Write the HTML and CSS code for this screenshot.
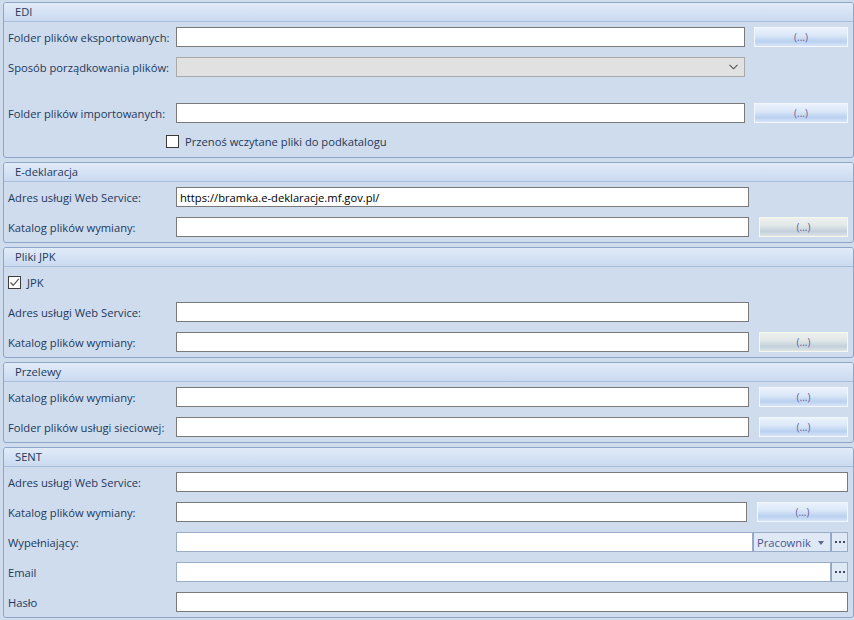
FILE: index.html
```html
<!DOCTYPE html>
<html lang="pl">
<head>
<meta charset="utf-8">
<title>Ustawienia</title>
<link rel="stylesheet" href="styles.css">
</head>
<body>
<div class="page">

  <section class="group">
    <div class="gh">EDI</div>
    <div class="gb pb6">
      <div class="row">
        <span class="lbl">Folder plików eksportowanych:</span>
        <div class="inp w569"></div>
        <div class="btn blue b-edi">(...)</div>
      </div>
      <div class="row mt10">
        <span class="lbl">Sposób porządkowania plików:</span>
        <div class="sel w569">
          <svg class="chev" width="9" height="6" viewBox="0 0 9 6"><path d="M0.5 0.8 L4.5 4.8 L8.5 0.8" fill="none" stroke="#505050" stroke-width="1.1"/></svg>
        </div>
      </div>
      <div class="row mt26">
        <span class="lbl">Folder plików importowanych:</span>
        <div class="inp w569"></div>
        <div class="btn blue b-edi">(...)</div>
      </div>
      <div class="row mt8 chkrow-edi">
        <span class="chk"></span>
        <span class="chklbl">Przenoś wczytane pliki do podkatalogu</span>
      </div>
    </div>
  </section>

  <section class="group">
    <div class="gh">E-deklaracja</div>
    <div class="gb">
      <div class="row">
        <span class="lbl">Adres usługi Web Service:</span>
        <div class="inp w573"><span class="val">https://bramka.e-deklaracje.mf.gov.pl/</span></div>
      </div>
      <div class="row mt10">
        <span class="lbl">Katalog plików wymiany:</span>
        <div class="inp w573"></div>
        <div class="btn gray b-std">(...)</div>
      </div>
    </div>
  </section>

  <section class="group">
    <div class="gh">Pliki JPK</div>
    <div class="gb">
      <div class="row">
        <span class="chk checked">
          <svg width="11" height="11" viewBox="0 0 11 11"><path d="M1.5 5.5 L4.2 8.3 L9.8 1.8" fill="none" stroke="#5a5a5a" stroke-width="1.3"/></svg>
        </span>
        <span class="chklbl">JPK</span>
      </div>
      <div class="row mt10">
        <span class="lbl">Adres usługi Web Service:</span>
        <div class="inp w573"></div>
      </div>
      <div class="row mt10">
        <span class="lbl">Katalog plików wymiany:</span>
        <div class="inp w573"></div>
        <div class="btn gray b-std">(...)</div>
      </div>
    </div>
  </section>

  <section class="group">
    <div class="gh">Przelewy</div>
    <div class="gb">
      <div class="row">
        <span class="lbl">Katalog plików wymiany:</span>
        <div class="inp w573"></div>
        <div class="btn blue b-std">(...)</div>
      </div>
      <div class="row mt10">
        <span class="lbl">Folder plików usługi sieciowej:</span>
        <div class="inp w573"></div>
        <div class="btn blue b-std">(...)</div>
      </div>
    </div>
  </section>

  <section class="group">
    <div class="gh">SENT</div>
    <div class="gb">
      <div class="row">
        <span class="lbl">Adres usługi Web Service:</span>
        <div class="inp w672"></div>
      </div>
      <div class="row mt10">
        <span class="lbl">Katalog plików wymiany:</span>
        <div class="inp w571"></div>
        <div class="btn blue b-sent">(...)</div>
      </div>
      <div class="row mt10">
        <span class="lbl">Wypełniający:</span>
        <div class="inp lookup w577"></div>
        <div class="combo">Pracownik<span class="tri"></span></div>
        <div class="dots"><svg width="10" height="2" viewBox="0 0 10 2"><rect x="0" y="0" width="2" height="2" fill="#3d4a6a"/><rect x="4" y="0" width="2" height="2" fill="#3d4a6a"/><rect x="8" y="0" width="2" height="2" fill="#3d4a6a"/></svg></div>
      </div>
      <div class="row mt10">
        <span class="lbl">Email</span>
        <div class="inp lookup w655"></div>
        <div class="dots"><svg width="10" height="2" viewBox="0 0 10 2"><rect x="0" y="0" width="2" height="2" fill="#3d4a6a"/><rect x="4" y="0" width="2" height="2" fill="#3d4a6a"/><rect x="8" y="0" width="2" height="2" fill="#3d4a6a"/></svg></div>
      </div>
      <div class="row mt10">
        <span class="lbl">Hasło</span>
        <div class="inp w672"></div>
      </div>
    </div>
  </section>

</div>
</body>
</html>
```

FILE: styles.css
```css
html, body {
  margin: 0;
  padding: 0;
  background: #cfdcee;
}
body {
  width: 854px;
  height: 620px;
  overflow: hidden;
  font-family: "Open Sans", "Noto Sans", sans-serif;
  font-size: 11.2px;
  color: #1e395b;
}
.page {
  display: flex;
  flex-direction: column;
  gap: 4px;
  padding: 2px 0 0 3px;
}
.group {
  width: 851px;
  box-sizing: border-box;
  border: 1px solid #8ea5c5;
  border-radius: 3px;
  background: #cfdcee;
}
.gh {
  height: 18px;
  line-height: 18px;
  padding-left: 11px;
  border-bottom: 1px solid #a7bedc;
  background: linear-gradient(to bottom, #e1ebf8 0%, #d3e1f4 60%, #cbdaef 100%);
  border-radius: 2px 2px 0 0;
}
.gb {
  padding: 5px 0 5px 4px;
}
.gb.pb6 { padding-bottom: 6px; }
.row {
  display: flex;
  align-items: center;
  height: 20px;
}
.mt8 { margin-top: 8px; }
.mt10 { margin-top: 10px; }
.mt26 { margin-top: 26px; }
.lbl {
  width: 168px;
  flex: none;
  white-space: nowrap;
}
.inp, .sel {
  height: 20px;
  box-sizing: border-box;
  border: 1px solid #7a7a7a;
  background: #ffffff;
  flex: none;
  display: flex;
  align-items: center;
}
.inp.lookup { border-color: #9aadc8; }
.sel {
  background: #e1e1e1;
  border-color: #a9a9a9;
  justify-content: flex-end;
  padding-right: 6px;
}
.val {
  color: #000;
  padding-left: 3px;
  white-space: nowrap;
}
.w569 { width: 569px; }
.w571 { width: 571px; }
.w573 { width: 573px; }
.w577 { width: 577px; }
.w655 { width: 655px; }
.w672 { width: 672px; }

.btn {
  height: 20px;
  box-sizing: border-box;
  flex: none;
  display: flex;
  align-items: center;
  justify-content: center;
  font-size: 10px;
  color: #6a5e94;
}
.btn.blue {
  border: 1px solid #f3f7fd;
  background: linear-gradient(to bottom, #eaf2fc 0%, #dce8f8 40%, #c2d7f2 65%, #bad1f0 75%, #d6e4f7 100%);
}
.btn.gray {
  border: 1px solid #f7f8ec;
  background: linear-gradient(to bottom, #eef1ee 0%, #e2e8e8 40%, #cbd6de 65%, #c4d1dc 75%, #dde5e6 100%);
}
.b-edi { width: 94px; margin-left: 9px; }
.b-std { width: 89px; margin-left: 10px; }
.b-sent { width: 91px; margin-left: 10px; }

.chkrow-edi { padding-left: 158px; }
.chk {
  width: 13px;
  height: 13px;
  box-sizing: border-box;
  border: 1px solid #3c3c3c;
  background: #fff;
  flex: none;
  display: flex;
  align-items: center;
  justify-content: center;
}
.chklbl {
  margin-left: 6px;
  white-space: nowrap;
}
.combo {
  width: 78px;
  height: 20px;
  box-sizing: border-box;
  flex: none;
  border: 1px solid #9aadc8;
  border-left: 1px solid #8ea5c5;
  background: #dfe8f5;
  color: #4c5690;
  display: flex;
  align-items: center;
  padding-left: 3px;
  position: relative;
}
.tri {
  position: absolute;
  right: 6px;
  top: 8px;
  width: 0;
  height: 0;
  border-left: 3.5px solid transparent;
  border-right: 3.5px solid transparent;
  border-top: 4px solid #5c6a8c;
}
.dots {
  width: 17px;
  height: 20px;
  box-sizing: border-box;
  flex: none;
  border: 1px solid #9aadc8;
  border-left-color: #8ea5c5;
  background: #dfe8f5;
  display: flex;
  align-items: center;
  justify-content: center;
}
```
